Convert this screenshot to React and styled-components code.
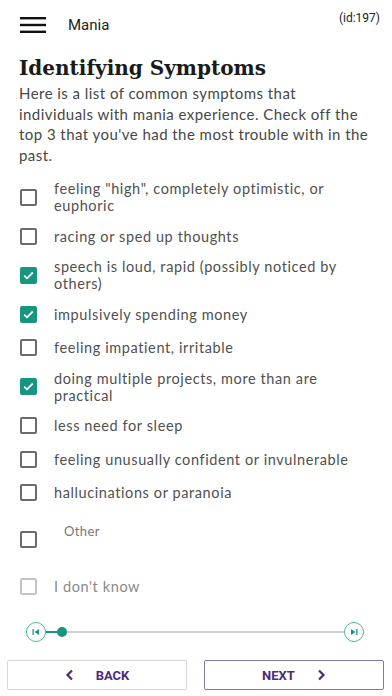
import React from "react"
import styled, { createGlobalStyle } from "styled-components"

const GlobalStyle = createGlobalStyle`
  html, body {
    margin: 0;
    padding: 0;
    background: #ffffff;
  }
  * {
    box-sizing: border-box;
  }
`

const Screen = styled.div`
  width: 392px;
  height: 696px;
  display: flex;
  flex-direction: column;
  background: #fff;
  overflow: hidden;
`

const Header = styled.header`
  height: 50px;
  display: flex;
  align-items: center;
  padding: 0 12px 0 20px;
  font-family: Roboto, "Liberation Sans", sans-serif;
`

const Title = styled.span`
  font-size: 15px;
  color: #222;
  margin-left: 22px;
  flex: 1;
`

const PageId = styled.span`
  align-self: flex-start;
  margin-top: 11px;
  font-size: 12px;
  color: #222;
`

const Content = styled.main`
  flex: 1;
  padding: 0 19px;
  display: flex;
  flex-direction: column;
`

const Heading = styled.h1`
  margin: 5px 0 0;
  font-family: "DejaVu Serif", "Liberation Serif", serif;
  font-weight: bold;
  font-size: 20px;
  line-height: 26px;
  color: #1a1a1a;
`

const Intro = styled.p`
  margin: 2px 0 10px;
  font-family: Lato, "Open Sans", sans-serif;
  font-size: 15px;
  line-height: 20.5px;
  color: #474747;
  letter-spacing: 0.45px;
`

const List = styled.div`
  display: flex;
  flex-direction: column;
`

const Row = styled.label`
  display: flex;
  align-items: center;
  min-height: ${p => (p.$tall ? "60.5px" : "33.5px")};
  padding: 5.25px 0 5.25px 1px;
  gap: 17px;
`

const Box = styled.span`
  flex: none;
  width: 17px;
  height: 17px;
  border-radius: 2px;
  border: 2px solid ${p => (p.$checked ? "#17957f" : p.$faint ? "#c4c4c4" : "#6b6b6b")};
  background: ${p => (p.$checked ? "#17957f" : "transparent")};
  display: flex;
  align-items: center;
  justify-content: center;
`

const ItemText = styled.span`
  font-family: Lato, "Open Sans", sans-serif;
  font-size: 14.5px;
  line-height: 17px;
  letter-spacing: 0.6px;
  color: ${p => (p.$faint ? "#8a8a8a" : "#505050")};
`

const OtherField = styled.span`
  align-self: stretch;
  display: flex;
  flex-direction: column;
  padding: 8px 0 0 10px;
  font-family: Lato, "Open Sans", sans-serif;
  font-size: 13px;
  color: #777;
  letter-spacing: 0.4px;
`

const SliderRow = styled.div`
  height: 56px;
  display: flex;
  align-items: center;
  padding: 0 7px;
`

const EndCap = styled.span`
  flex: none;
  width: 20px;
  height: 20px;
  border-radius: 50%;
  border: 1.5px solid #4fb3a2;
  display: flex;
  align-items: center;
  justify-content: center;
`

const Track = styled.div`
  flex: 1;
  height: 2px;
  background: #cfcfcf;
  position: relative;
  display: flex;
  align-items: center;
`

const Filled = styled.div`
  height: 2px;
  background: #17957f;
`

const Thumb = styled.span`
  position: absolute;
  top: -4px;
  width: 10px;
  height: 10px;
  border-radius: 50%;
  background: #17957f;
`

const Footer = styled.footer`
  display: grid;
  grid-template-columns: 1fr 1fr;
  gap: 17px;
  padding: 0 8px 6px 7px;
`

const NavButton = styled.button`
  height: 30px;
  border-radius: 2px;
  background: #fff;
  border: 1px solid ${p => (p.$primary ? "#8578a6" : "#d8d8d8")};
  display: flex;
  align-items: center;
  justify-content: center;
  gap: 21px;
  font-family: Roboto, "Liberation Sans", sans-serif;
  font-weight: bold;
  font-size: 13px;
  color: #4b2c7d;
  padding: 0;
`

const Check = () => (
  <svg width="11" height="9" viewBox="0 0 11 9">
    <path d="M1.2 4.6 L4 7.3 L9.8 1.5" fill="none" stroke="#fff" strokeWidth="1.8" />
  </svg>
)

const Hamburger = () => (
  <svg width="26" height="16" viewBox="0 0 26 16">
    <rect x="0" y="0" width="26" height="2.4" fill="#111" />
    <rect x="0" y="6.8" width="26" height="2.4" fill="#111" />
    <rect x="0" y="13.6" width="26" height="2.4" fill="#111" />
  </svg>
)

const Chevron = ({ dir }) => (
  <svg width="10" height="12" viewBox="0 0 10 12">
    <path
      d={dir === "left" ? "M7 1.5 L2.5 6 L7 10.5" : "M3 1.5 L7.5 6 L3 10.5"}
      fill="none"
      stroke="#4b2c7d"
      strokeWidth="2.2"
    />
  </svg>
)

const SkipIcon = ({ dir }) => (
  <svg width="8" height="6" viewBox="0 0 8 6">
    {dir === "start" ? (
      <>
        <rect x="0.5" y="0" width="1.3" height="6" fill="#17957f" />
        <path d="M7 0 L2.5 3 L7 6 Z" fill="#17957f" />
      </>
    ) : (
      <>
        <path d="M1 0 L5.5 3 L1 6 Z" fill="#17957f" />
        <rect x="6.2" y="0" width="1.3" height="6" fill="#17957f" />
      </>
    )}
  </svg>
)

const symptoms = [
  { text: 'feeling "high", completely optimistic, or euphoric' },
  { text: "racing or sped up thoughts" },
  { text: "speech is loud, rapid (possibly noticed by others)", checked: true },
  { text: "impulsively spending money", checked: true },
  { text: "feeling impatient, irritable" },
  { text: "doing multiple projects, more than are practical", checked: true },
  { text: "less need for sleep" },
  { text: "feeling unusually confident or invulnerable" },
  { text: "hallucinations or paranoia" },
]

export default function App() {
  return (
    <Screen>
      <GlobalStyle />
      <Header>
        <Hamburger />
        <Title>Mania</Title>
        <PageId>(id:197)</PageId>
      </Header>
      <Content>
        <Heading>Identifying Symptoms</Heading>
        <Intro>
          Here is a list of common symptoms that individuals with mania experience. Check off the
          top 3 that you've had the most trouble with in the past.
        </Intro>
        <List>
          {symptoms.map(s => (
            <Row key={s.text}>
              <Box $checked={s.checked}>{s.checked && <Check />}</Box>
              <ItemText>{s.text}</ItemText>
            </Row>
          ))}
          <Row $tall>
            <Box />
            <OtherField>Other</OtherField>
          </Row>
          <Row>
            <Box $faint />
            <ItemText $faint>I don't know</ItemText>
          </Row>
        </List>
      </Content>
      <SliderRow>
        <EndCap style={{ marginLeft: 19 }}>
          <SkipIcon dir="start" />
        </EndCap>
        <Track>
          <Filled style={{ width: 12 }} />
          <Thumb style={{ left: 11 }} />
        </Track>
        <EndCap style={{ marginRight: 21 }}>
          <SkipIcon dir="end" />
        </EndCap>
      </SliderRow>
      <Footer>
        <NavButton>
          <Chevron dir="left" />
          BACK
        </NavButton>
        <NavButton $primary>
          NEXT
          <Chevron dir="right" />
        </NavButton>
      </Footer>
    </Screen>
  )
}
